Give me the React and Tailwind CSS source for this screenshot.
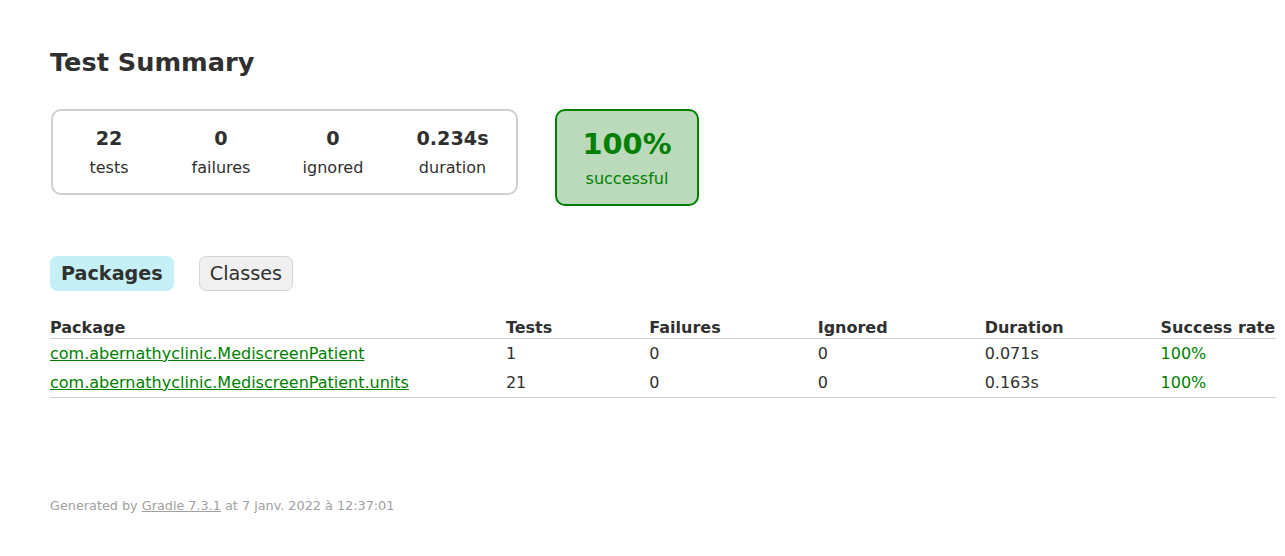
const counters = [
  { value: '22', label: 'tests', width: 'w-[112px]' },
  { value: '0', label: 'failures', width: 'w-[112px]' },
  { value: '0', label: 'ignored', width: 'w-[112px]' },
  { value: '0.234s', label: 'duration', width: 'w-[127px]' },
];

const packages = [
  { name: 'com.abernathyclinic.MediscreenPatient', tests: 1, failures: 0, ignored: 0, duration: '0.071s', rate: '100%' },
  { name: 'com.abernathyclinic.MediscreenPatient.units', tests: 21, failures: 0, ignored: 0, duration: '0.163s', rate: '100%' },
];

const App = () => {
  return (
    <div className="min-h-screen bg-white font-['DejaVu_Sans',sans-serif] text-[16px] leading-[normal] text-[#303030]">
      <div className="px-[50px] pt-[30px] pb-[30px]">
        {/* Titre */}
        <h1 className="mt-[17px] whitespace-nowrap text-[25.6px] font-bold">Test Summary</h1>

        {/* Résumé */}
        <div className="mt-[31px] mb-[39px] flex items-start py-[1px] pl-[1px]">
          <div className="flex rounded-[10px] border-2 border-[#d0d0d0]">
            {counters.map((c) => (
              <div key={c.label} className={`${c.width} p-[1px]`}>
                <div className="py-[15px] text-center">
                  <p className="mb-[8px] text-[19.2px] font-bold">{c.value}</p>
                  <p>{c.label}</p>
                </div>
              </div>
            ))}
          </div>
          <div className="ml-[37px] w-[144px] rounded-[10px] border-2 border-[#008000] bg-[#bbd9bb] p-[1px] text-center text-[#008000]">
            <div className="py-[15px]">
              <p className="mb-[8px] text-[28.8px] font-bold">100%</p>
              <p>successful</p>
            </div>
          </div>
        </div>

        {/* Onglets */}
        <ul className="flex py-[10px] mb-[16px]">
          <li className="mr-[25px] rounded-[7px] border border-[#c5f0f5] bg-[#c5f0f5] px-[10px] py-[5px]">
            <h2 className="text-[19.2px] font-bold">Packages</h2>
          </li>
          <li className="mr-[25px] rounded-[7px] border border-[#d4d4d4] bg-[#f0f0f0] px-[10px] py-[5px]">
            <a href="#tab1" className="text-[19.2px] text-[#303030]">Classes</a>
          </li>
        </ul>

        {/* Tableau des packages */}
        <table className="border-collapse border-b border-[#d0d0d0]">
          <thead>
            <tr>
              {['Package', 'Tests', 'Failures', 'Ignored', 'Duration', 'Success rate'].map((h, i) => (
                <th
                  key={h}
                  className={`whitespace-nowrap border-b border-[#d0d0d0] p-[1px] text-left font-bold ${i === 0 ? 'pl-0' : 'pl-[96px]'}`}
                >
                  {h}
                </th>
              ))}
            </tr>
          </thead>
          <tbody>
            {packages.map((p) => (
              <tr key={p.name}>
                <td className="whitespace-nowrap py-[5px] pr-[1px] pl-0">
                  <a href="#" className="text-[#008000] underline">{p.name}</a>
                </td>
                <td className="whitespace-nowrap py-[5px] pr-[1px] pl-[96px]">{p.tests}</td>
                <td className="whitespace-nowrap py-[5px] pr-[1px] pl-[96px]">{p.failures}</td>
                <td className="whitespace-nowrap py-[5px] pr-[1px] pl-[96px]">{p.ignored}</td>
                <td className="whitespace-nowrap py-[5px] pr-[1px] pl-[96px]">{p.duration}</td>
                <td className="whitespace-nowrap py-[5px] pr-[1px] pl-[96px] text-[#008000]">{p.rate}</td>
              </tr>
            ))}
          </tbody>
        </table>

        {/* Pied de page */}
        <div className="mt-[100px] whitespace-nowrap text-[12.8px] text-[#a0a0a0]">
          <p>
            Generated by <a href="#" className="text-[#a0a0a0] underline">Gradle 7.3.1</a> at 7 janv. 2022 à 12:37:01
          </p>
        </div>
      </div>
    </div>
  );
};

export default App;
